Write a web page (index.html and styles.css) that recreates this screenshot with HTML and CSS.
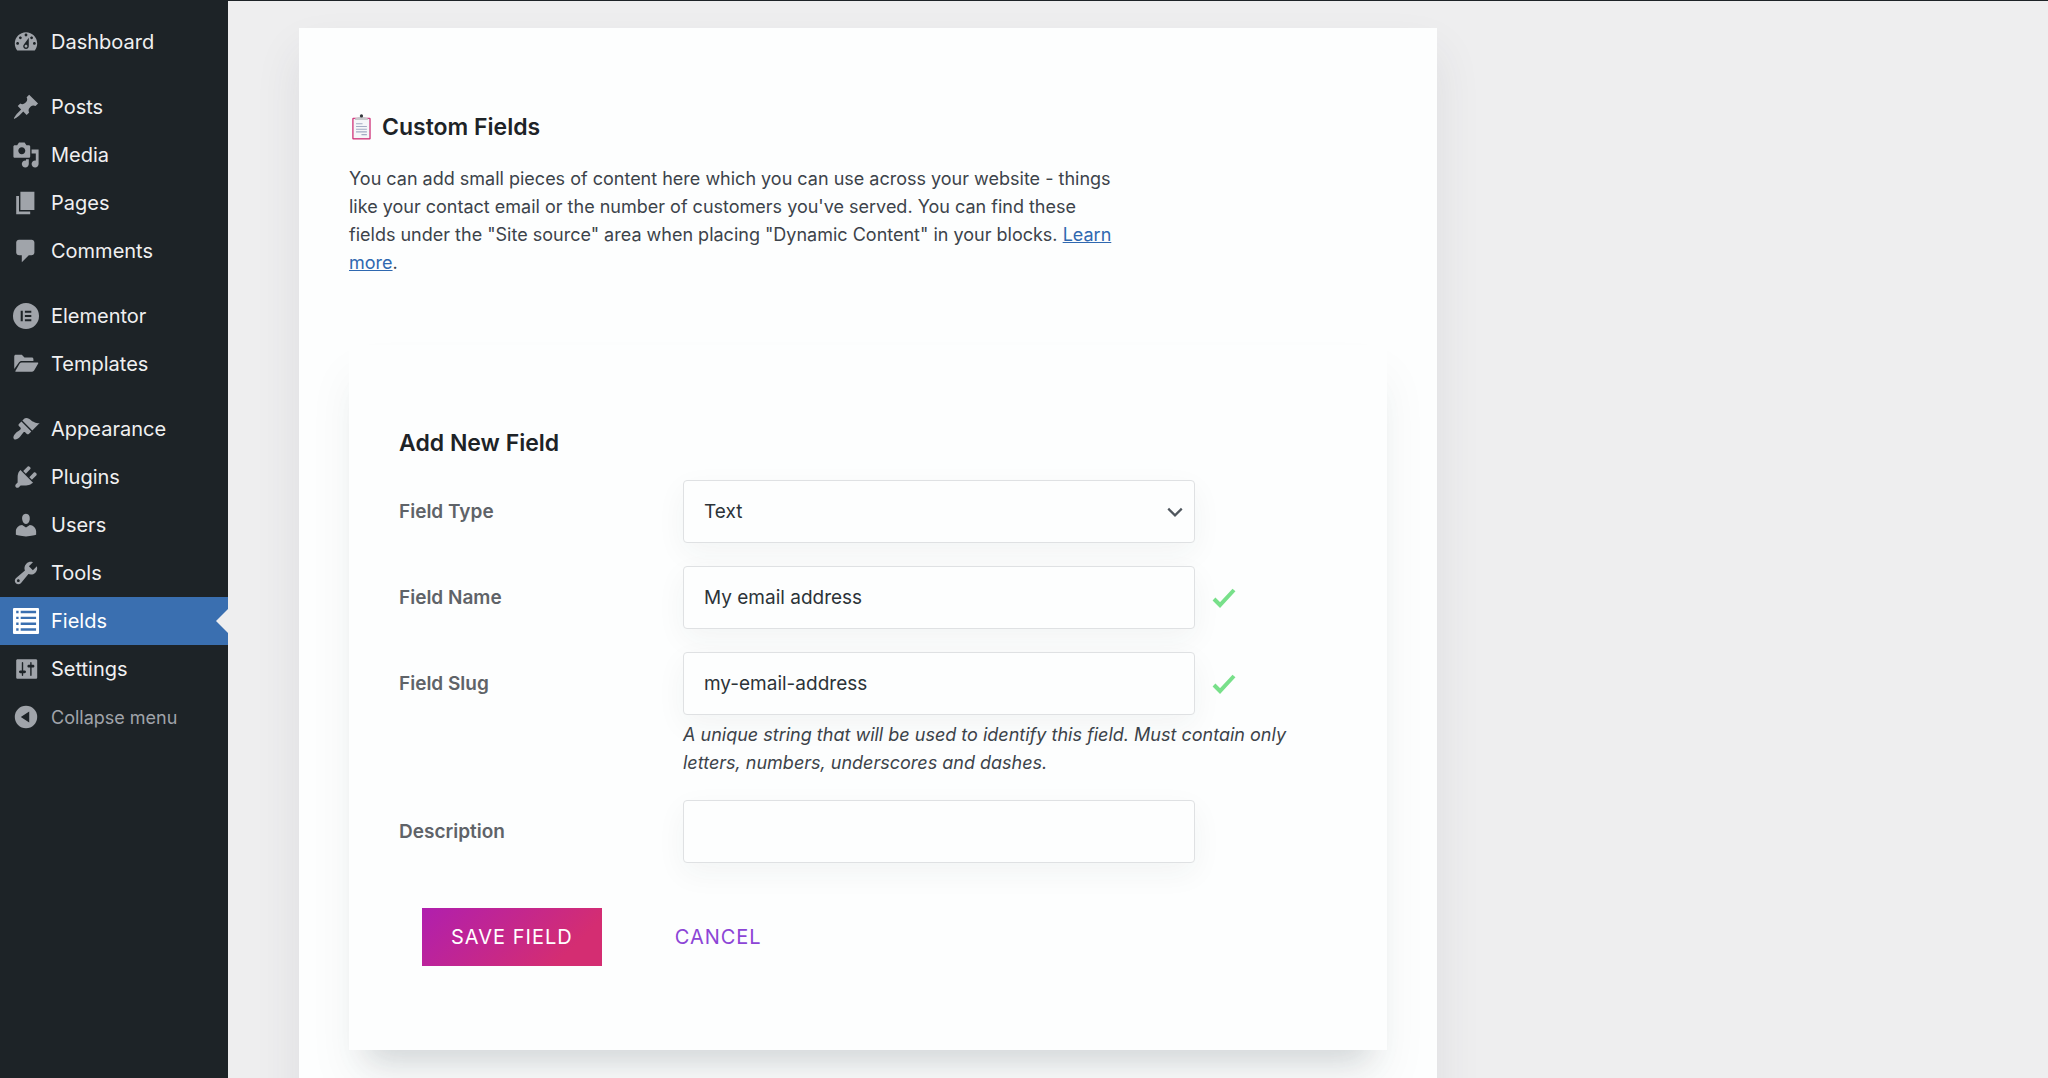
FILE: index.html
```html
<!DOCTYPE html>
<html lang="en">
<head>
    <meta charset="UTF-8">
    <title>Custom Fields</title>
    <link rel="stylesheet" href="styles.css">
</head>
<body>
    <nav class="admin-menu">
        <ul class="menu-group">
            <li><a class="menu-item" href="#"><svg class="menu-icon" viewBox="0 0 20 20"><path fill-rule="evenodd" d="M3.76 16h12.48c1.1-1.37 1.76-3.11 1.76-5 0-4.42-3.58-8-8-8s-8 3.58-8 8c0 1.89.66 3.63 1.76 5zM10 4c.55 0 1 .45 1 1s-.45 1-1 1-1-.45-1-1 .45-1 1-1zM6 6c.55 0 1 .45 1 1s-.45 1-1 1-1-.45-1-1 .45-1 1-1zm8 0c.55 0 1 .45 1 1s-.45 1-1 1-1-.45-1-1 .45-1 1-1zm-5.37 5.55L12 7v6c0 1.1-.9 2-2 2s-2-.9-2-2c0-.57.24-1.08.63-1.45zM4 10c.55 0 1 .45 1 1s-.45 1-1 1-1-.45-1-1 .45-1 1-1zm12 0c.55 0 1 .45 1 1s-.45 1-1 1-1-.45-1-1 .45-1 1-1zm-6 2c.55 0 1 .45 1 1s-.45 1-1 1-1-.45-1-1 .45-1 1-1z"/></svg>Dashboard</a></li>
        </ul>
        <ul class="menu-group">
            <li><a class="menu-item" href="#"><svg class="menu-icon" viewBox="0 0 20 20"><path d="M10.44 3.02l1.82-1.82 6.36 6.35-1.83 1.82c-1.05-.68-2.48-.57-3.41.36l-.75.75c-.92.93-1.04 2.35-.35 3.41l-1.83 1.82-2.41-2.41-2.8 2.79c-.42.42-3.38 2.71-3.8 2.29s1.86-3.39 2.28-3.81l2.79-2.79L4.1 9.36l1.83-1.82c1.05.69 2.48.57 3.4-.36l.75-.75c.93-.92 1.05-2.35.36-3.41z"/></svg>Posts</a></li>
            <li><a class="menu-item" href="#"><svg class="menu-icon" viewBox="0 0 20 20"><path fill-rule="evenodd" d="M13 11V4c0-.55-.45-1-1-1h-1.67L9 1H5L3.67 3H2c-.55 0-1 .45-1 1v7c0 .55.45 1 1 1h10c.55 0 1-.45 1-1zM7 4.5c1.38 0 2.5 1.12 2.5 2.5S8.38 9.5 7 9.5 4.5 8.38 4.5 7 5.62 4.5 7 4.5zM14 6h5v10.5c0 1.38-1.12 2.5-2.5 2.5S14 17.88 14 16.5s1.12-2.5 2.5-2.5c.17 0 .34.02.5.05V9h-3V6zm-4 8.05V13h2v3.5c0 1.38-1.12 2.5-2.5 2.5S7 17.88 7 16.5 8.12 14 9.5 14c.17 0 .34.02.5.05z"/></svg>Media</a></li>
            <li><a class="menu-item" href="#"><svg class="menu-icon" viewBox="0 0 20 20"><path d="M6 15V2h10v13H6zm-1 1h8v2H3V5h2v11z"/></svg>Pages</a></li>
            <li><a class="menu-item" href="#"><svg class="menu-icon" viewBox="0 0 20 20"><path d="M5 2h9c1.1 0 2 .9 2 2v7c0 1.1-.9 2-2 2h-2l-5 5v-5H5c-1.1 0-2-.9-2-2V4c0-1.1.9-2 2-2z"/></svg>Comments</a></li>
        </ul>
        <ul class="menu-group">
            <li><a class="menu-item" href="#"><svg class="menu-icon" viewBox="0 0 20 20"><path fill-rule="evenodd" d="M10 .7a9.3 9.3 0 1 0 0 18.600a9.300 9.300 0 0 0 0-18.600zM6.200 6.200h1.500v7.600H6.200zM9.200 6.200h4.600v1.500H9.200zM9.200 9.250h4.600v1.500H9.200zM9.200 12.300h4.600v1.500H9.200z"/></svg>Elementor</a></li>
            <li><a class="menu-item" href="#"><svg class="menu-icon" viewBox="0 0 20 20"><path d="M1.600 13.500V4.600c0-.7.500-1.200 1.200-1.200h4.200l1.900 2h5.200c.7 0 1.200.5 1.200 1.200v1.300H7c-.9 0-1.700.5-2.200 1.200zM2.300 15.200l3.200-5.500c.3-.5.800-.8 1.400-.8h11.300c.5 0 .7.4.5.8l-2.900 5c-.3.5-.8.800-1.400.8H2.800c-.4 0-.6-.1-.5-.3z"/></svg>Templates</a></li>
        </ul>
        <ul class="menu-group">
            <li><a class="menu-item" href="#"><svg class="menu-icon" viewBox="0 0 20 20"><path d="M14.480 11.060L7.410 3.990l1.500-1.500c.5-.56 2.300-.47 3.510.32 1.210.8 1.430 1.280 2.910 2.100 1.180.64 2.450 1.260 4.450.85zm-.71.71L6.700 4.700 4.930 6.470c-.39.39-.39 1.020 0 1.410l1.060 1.060c.39.39.39 1.030 0 1.420-.6.6-1.430 1.110-2.210 1.690-.35.26-.7.53-1.010.84C1.430 14.230.400 16.080 1.400 17.070c.99 1 2.840-.03 4.180-1.360.31-.31.58-.66.85-1.020.57-.78 1.080-1.610 1.690-2.210.39-.39 1.020-.39 1.410 0l1.060 1.060c.39.39 1.020.39 1.410 0z"/></svg>Appearance</a></li>
            <li><a class="menu-item" href="#"><svg class="menu-icon" viewBox="0 0 20 20"><path d="M13.11 4.360L9.870 7.600 8 5.730l3.240-3.240c.35-.34 1.050-.2 1.560.32.52.51.66 1.210.31 1.550zm-8 1.770l.91-1.120 9.010 9.010-1.190.84c-.71.71-2.630 1.160-3.820 1.160H6.140L4.900 17.260c-.59.59-1.540.59-2.120 0-.59-.58-.59-1.530 0-2.120l1.240-1.240v-3.880c0-1.130.4-3.190 1.090-3.890zm7.260 3.970l3.240-3.240c.34-.35 1.040-.21 1.550.31.52.51.66 1.210.31 1.550l-3.240 3.250z"/></svg>Plugins</a></li>
            <li><a class="menu-item" href="#"><svg class="menu-icon" viewBox="0 0 20 20"><path d="M10 9.250c-2.270 0-2.730-3.440-2.730-3.440C7 4.020 7.820 2 9.970 2c2.160 0 2.980 2.020 2.710 3.810 0 0-.41 3.440-2.680 3.440zm0 2.570L12.720 10c2.390 0 4.520 2.330 4.520 4.530v2.490s-3.650 1.130-7.240 1.130c-3.650 0-7.240-1.130-7.240-1.130v-2.490c0-2.250 1.940-4.480 4.470-4.480z"/></svg>Users</a></li>
            <li><a class="menu-item" href="#"><svg class="menu-icon" viewBox="0 0 20 20"><path fill-rule="evenodd" d="M16.680 9.770c-1.340 1.340-3.300 1.670-4.950.99l-5.410 6.520c-.99.99-2.590.99-3.580 0s-.99-2.590 0-3.570l6.520-5.420c-.68-1.650-.35-3.610.99-4.950 1.280-1.280 3.120-1.620 4.720-1.060l-2.890 2.890 2.820 2.820 2.860-2.870c.53 1.580.18 3.390-1.080 4.650zM3.810 16.210c.4.39 1.040.39 1.430 0 .4-.4.4-1.040 0-1.430-.39-.4-1.030-.4-1.430 0-.39.39-.39 1.030 0 1.430z"/></svg>Tools</a></li>
            <li><a class="menu-item current" href="#"><svg class="menu-icon" viewBox="0 0 20 20"><path fill-rule="evenodd" d="M1.500.7h17q.8 0 .8.8v17q0 .8-.8.8h-17q-.8 0-.8-.8v-17q0-.8.8-.8zM3 2.700v1.700h1.700V2.700zM6.200 2.700v1.700h11V2.700zM3 6.900v1.700h1.700V6.900zM6.200 6.900v1.700h11V6.900zM3 11.100v1.700h1.700v-1.700zM6.200 11.100v1.700h11v-1.700zM3 15.200v1.700h1.700v-1.700zM6.200 15.200v1.700h11v-1.700z"/></svg>Fields</a></li>
            <li><a class="menu-item" href="#"><svg class="menu-icon" viewBox="0 0 20 20"><path fill-rule="evenodd" d="M18 16V4c0-.6-.4-1-1-1H4c-.6 0-1 .4-1 1v12c0 .6.400 1 1 1h13c.6 0 1-.4 1-1zM8 11h1c.55 0 1 .45 1 1s-.45 1-1 1H8v1.500c0 .28-.22.5-.5.5s-.5-.22-.5-.5V13H6c-.55 0-1-.45-1-1s.45-1 1-1h1V5.500c0-.28.22-.5.5-.5s.5.22.5.5V11zm5-2h-1c-.55 0-1-.45-1-1s.45-1 1-1h1V5.500c0-.28.22-.5.5-.5s.5.22.5.5V7h1c.55 0 1 .45 1 1s-.45 1-1 1h-1v5.500c0 .28-.22.5-.5.5s-.5-.22-.5-.5V9z"/></svg>Settings</a></li>
            <li><button class="menu-item collapse" type="button"><svg class="menu-icon" viewBox="0 0 20 20"><path fill-rule="evenodd" d="M10 2a8 8 0 1 0 0 16a8 8 0 0 0 0-16zM12.300 6v8L6.300 10z"/></svg>Collapse menu</button></li>
        </ul>
    </nav>

    <main class="content">
        <section class="panel">
            <h1 class="title">
                <svg class="clipboard" viewBox="0 0 24 24"><rect x="3" y="3.500" width="17" height="20" rx="1" fill="#cf3279"/><rect x="4.200" y="4.500" width="14.600" height="17.800" fill="#f5f6f9"/><path d="M5.500 5.500V4.200l3.500-1.400h5l3.500 1.400v1.300z" fill="#c8c9cc"/><circle cx="11.500" cy="1.800" r="1.500" fill="#33363b"/><path d="M6.500 9h6M6.500 11.500h10M6.500 14h10M6.500 16.500h10M11.500 19h5" stroke="#a3abc4" stroke-width="1"/></svg>
                Custom Fields
            </h1>
            <p class="intro">You can add small pieces of content here which you can use across your website - things like your contact email or the number of customers you've served. You can find these fields under the "Site source" area when placing "Dynamic Content" in your blocks. <a href="#">Learn more</a>.</p>

            <form class="field-form">
                <h2 class="title">Add New Field</h2>
                <div class="form-row">
                    <label for="fieldType">Field Type</label>
                    <div class="control">
                        <select id="fieldType">
                            <option>Text</option>
                        </select>
                        <svg class="chevron" viewBox="0 0 16 16"><path d="M2 5l6 6 6-6"/></svg>
                    </div>
                </div>
                <div class="form-row">
                    <label for="fieldName">Field Name</label>
                    <div class="control">
                        <input type="text" id="fieldName" value="My email address">
                    </div>
                    <svg class="check" viewBox="0 0 24 20"><path d="M2 11l6 6L22 2"/></svg>
                </div>
                <div class="form-row">
                    <label for="fieldSlug">Field Slug</label>
                    <div class="control">
                        <input type="text" id="fieldSlug" value="my-email-address">
                    </div>
                    <svg class="check" viewBox="0 0 24 20"><path d="M2 11l6 6L22 2"/></svg>
                    <p class="help">A unique string that will be used to identify this field. Must contain only letters, numbers, underscores and dashes.</p>
                </div>
                <div class="form-row">
                    <label for="fieldDescription">Description</label>
                    <div class="control">
                        <input type="text" id="fieldDescription">
                    </div>
                </div>
                <div class="actions">
                    <button class="btn btn-save" type="button">SAVE FIELD</button>
                    <button class="btn btn-cancel" type="button">CANCEL</button>
                </div>
            </form>
        </section>
    </main>
</body>
</html>
```

FILE: styles.css
```css
* {
    box-sizing: border-box;
}
body {
    display: flex;
    min-height: 100vh;
    margin: 0;
    background: #eeeeef;
    color: #3c434a;
    font-family: Inter, "Liberation Sans", sans-serif;
    font-size: 18px;
    line-height: 28px;
}

/* sidebar */
.admin-menu {
    display: flex;
    flex-direction: column;
    gap: 17px;
    width: 228px;
    flex-shrink: 0;
    padding-top: 18px;
    background: #1d2327;
}
.menu-group {
    margin: 0;
    padding: 0;
    list-style: none;
}
.menu-item {
    position: relative;
    display: flex;
    align-items: center;
    gap: 11px;
    width: 100%;
    height: 48px;
    padding: 0 12px;
    color: #f0f0f1;
    font-size: 20px;
    text-decoration: none;
}
.menu-icon {
    width: 28px;
    height: 28px;
    fill: #a0a4aa;
}
.menu-item.current {
    background: #3a6fb0;
    color: #fff;
}
.menu-item.current .menu-icon {
    fill: #fff;
}
.menu-item.current::after {
    content: "";
    position: absolute;
    right: 0;
    top: 12px;
    border: 12px solid transparent;
    border-left-width: 0;
    border-right-color: #eeeeef;
}
.menu-item.collapse {
    border: none;
    background: none;
    color: #a0a4aa;
    font-family: inherit;
    font-size: 18px;
    cursor: pointer;
}

/* main area */
.content {
    flex: 1;
    border-top: 1px solid #1d2327;
    padding: 27px 71px 0;
    overflow: hidden;
}
.panel {
    max-width: 1138px;
    min-height: 100vh;
    padding: 85px 50px 30px;
    background: #fdfefe;
    box-shadow: 0 24px 44px rgba(50, 60, 80, 0.09);
}
.title {
    display: flex;
    align-items: center;
    gap: 7px;
    margin: 0;
    color: #1d2327;
    font-size: 23px;
    font-weight: 600;
    line-height: 28px;
}
.clipboard {
    width: 26px;
    height: 26px;
}
.intro {
    max-width: 772px;
    margin: 24px 0 0;
}
.intro a {
    color: #2f68b0;
}
.field-form {
    margin-top: 68px;
    padding: 84px 50px;
    background: #fdfefe;
    box-shadow: 0 30px 30px -20px rgba(40, 50, 60, 0.16), 0 30px 44px rgba(40, 50, 60, 0.05);
}

/* form */
.form-row {
    display: grid;
    grid-template-columns: 284px 512px 1fr;
    align-items: center;
    margin-top: 23px;
}
.form-row label {
    color: #5f6368;
    font-size: 19px;
    font-weight: 600;
}
.control {
    position: relative;
}
.control input,
.control select {
    display: block;
    width: 100%;
    height: 63px;
    padding: 0 20px;
    border: 1px solid #dfe1e3;
    border-radius: 4px;
    background: #fdfefe;
    box-shadow: 0 10px 30px rgba(40, 50, 60, 0.05);
    color: #2c3338;
    font-family: inherit;
    font-size: 19px;
    appearance: none;
}
.chevron {
    position: absolute;
    top: 23px;
    right: 11px;
    width: 18px;
    height: 18px;
    fill: none;
    stroke: #50575e;
    stroke-width: 2;
    pointer-events: none;
}
.check {
    width: 24px;
    height: 20px;
    margin-left: 17px;
    fill: none;
    stroke: #78e08a;
    stroke-width: 4;
}
.help {
    grid-column: 2 / 4;
    margin: 6px 0 0;
    font-style: italic;
}
.actions {
    display: flex;
    gap: 44px;
    margin: 45px 0 0 23px;
}
.btn {
    height: 58px;
    padding: 0 29px;
    border: none;
    font-family: inherit;
    font-size: 20px;
    letter-spacing: 1px;
    cursor: pointer;
}
.btn-save {
    background: linear-gradient(135deg, #b01fae, #d42d72 80%);
    color: #fff;
}
.btn-cancel {
    background: none;
    color: #8c45d6;
}
```
